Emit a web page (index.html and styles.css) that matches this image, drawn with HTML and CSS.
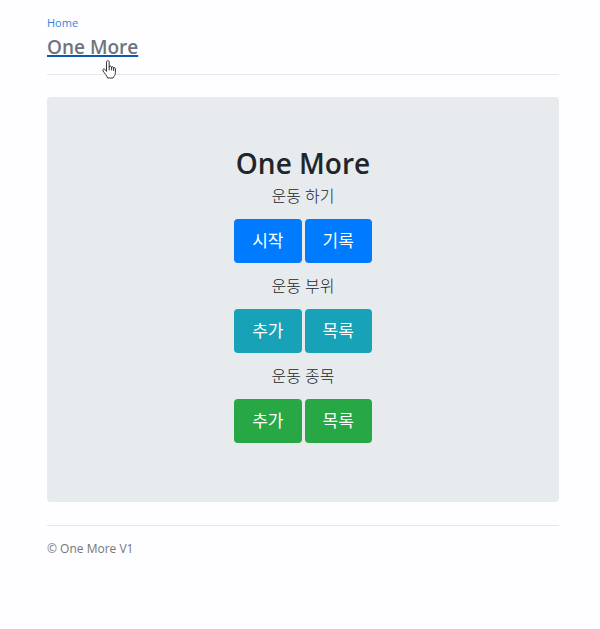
FILE: index.html
```html
<!DOCTYPE html>
<html lang="ko">
<head>
<meta charset="utf-8">
<meta name="viewport" content="width=device-width, initial-scale=1">
<title>One More</title>
<link rel="stylesheet" href="styles.css">
</head>
<body>
<div class="container">
  <header class="header">
    <nav><a class="home" href="#">Home</a></nav>
    <h3 class="brand"><a href="#">One More</a></h3>
    <svg class="cursor" viewBox="0 0 14 19" aria-hidden="true">
      <path d="M4.5 11V2.2C4.5 .2 7.2 .2 7.2 2.2V7C7.2 5.700 9.600 5.800 9.600 7.500C9.600 6.300 11.600 6.500 11.600 8.200C11.800 7.200 13.400 7.400 13.400 9V12.500C13.400 15.500 12 16 11 18H5.500C5 15.500 2.500 13.500 1 10.800C.2 9.300 2 8.300 3.200 9.600Z"/>
      <path d="M7.200 7V10M9.600 7.500V10M11.600 8.200V10.500"/>
    </svg>
  </header>
  <main class="jumbotron">
    <h1>One More</h1>
    <p class="lead">운동 하기</p>
    <div class="actions"><a class="btn primary" href="#">시작</a><a class="btn primary" href="#">기록</a></div>
    <p class="lead">운동 부위</p>
    <div class="actions"><a class="btn info" href="#">추가</a><a class="btn info" href="#">목록</a></div>
    <p class="lead">운동 종목</p>
    <div class="actions"><a class="btn success" href="#">추가</a><a class="btn success" href="#">목록</a></div>
  </main>
  <footer class="footer">© One More V1</footer>
</div>
</body>
</html>
```
FILE: styles.css
```css
* { box-sizing: border-box; }
body {
  margin: 0;
  background: #fefdff;
  color: #212529;
  font: 12px/18px "Open Sans", "Noto Sans CJK KR", sans-serif;
}
a { text-decoration: none; }
.container { padding: 14px 41px 14px 47px; }
.header {
  position: relative;
  padding-bottom: 15px;
  margin-bottom: 22px;
  border-bottom: 1px solid #e9e9ec;
}
.home { color: #2f86dc; font-size: 11px; }
.brand { margin: 3px 0 0; font-size: 19px; line-height: 24px; font-weight: 600; }
.brand a {
  color: #6c757d;
  text-decoration: underline;
  text-decoration-color: #0a58b0;
  text-decoration-thickness: 2px;
  text-decoration-skip-ink: none;
}
.cursor {
  position: absolute;
  left: 55px;
  top: 46px;
  width: 14px;
  height: 19px;
  fill: #fff;
  stroke: #333;
  stroke-linecap: round;
  stroke-linejoin: round;
}
.jumbotron {
  padding: 48px 24px 51px;
  margin-bottom: 23px;
  background: #e7ebee;
  border-radius: 4px;
  text-align: center;
}
.jumbotron h1 { margin: 0; font-size: 28px; line-height: 36px; font-weight: 600; }
.lead { margin: 0; padding-top: 3px; font-size: 16px; line-height: 24px; font-weight: 300; }
.actions { display: flex; justify-content: center; gap: 3px; padding: 11px 0 8px; }
.btn {
  padding: 10px 18px;
  border-radius: 4px;
  color: #fff;
  font-size: 17px;
  line-height: 24px;
}
.primary { background: #007bff; }
.info { background: #17a2b8; }
.success { background: #28a745; }
.footer { padding-top: 14px; border-top: 1px solid #e2e6e9; color: #777; }
```
